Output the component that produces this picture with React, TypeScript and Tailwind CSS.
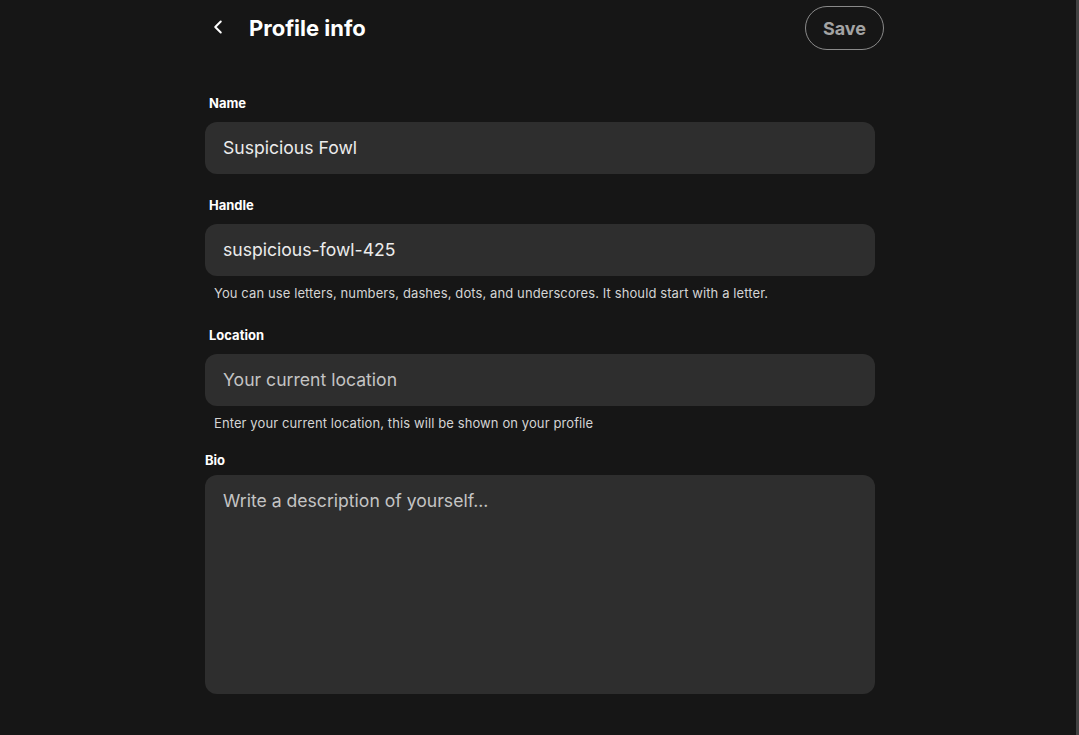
import { ChevronLeft } from "lucide-react";

const font = { fontFamily: "Inter, 'Noto Sans', sans-serif" };

const App = () => {
  return (
    <div className="flex min-h-[735px] bg-[#161616] text-white" style={font}>
      <div className="flex-1 pl-[4px]">
        <div className="mx-auto w-[670px]">
          {/* Header */}
          <div className="flex h-[57px] items-start pt-[6px] -mr-[9px]">
            <button className="mt-[5px] -ml-[3px] flex h-8 w-8 items-center justify-center text-white">
              <ChevronLeft size={22} strokeWidth={2.2} />
            </button>
            <h1 className="ml-[15px] mt-[5px] text-[22px] leading-[34px] font-bold">Profile info</h1>
            <button className="ml-auto h-[44px] w-[79px] rounded-full border border-[#8a8a8a] text-[18px] font-bold text-[#a3a3a3]">
              Save
            </button>
          </div>

          {/* Form */}
          <div className="flex flex-col pt-[38px]">
            <label className="pl-[4px] text-[13px] leading-4 font-bold">Name</label>
            <input
              defaultValue="Suspicious Fowl"
              className="mt-[11px] h-[52px] rounded-xl bg-[#2e2e2e] px-[18px] pb-[2px] text-[17.6px] text-[#ececec] outline-none"
            />

            <label className="mt-[23px] pl-[4px] text-[13px] leading-4 font-bold">Handle</label>
            <input
              defaultValue="suspicious-fowl-425"
              className="mt-[11px] h-[52px] rounded-xl bg-[#2e2e2e] px-[18px] pb-[2px] text-[17.6px] text-[#ececec] outline-none"
            />
            <p className="mt-[9px] pl-[9px] text-[13px] leading-4 tracking-[0.1px] text-[#d4d4d4]">
              You can use letters, numbers, dashes, dots, and underscores. It should start with a letter.
            </p>

            <label className="mt-[26px] pl-[4px] text-[13px] leading-4 font-bold">Location</label>
            <input
              placeholder="Your current location"
              className="mt-[11px] h-[52px] rounded-xl bg-[#2e2e2e] px-[18px] pb-[2px] text-[17.6px] text-[#ececec] outline-none placeholder:text-[#c4c4c4]"
            />
            <p className="mt-[9px] pl-[9px] text-[13px] leading-4 tracking-[0.1px] text-[#d4d4d4]">
              Enter your current location, this will be shown on your profile
            </p>

            <label className="mt-[21px] text-[13px] leading-4 font-bold">Bio</label>
            <textarea
              placeholder="Write a description of yourself..."
              className="mt-[7px] h-[219px] resize-none rounded-xl bg-[#2e2e2e] px-[18px] py-[13px] text-[17.6px] leading-[26px] text-[#ececec] outline-none placeholder:text-[#c4c4c4]"
            />
          </div>
        </div>
      </div>
      <div className="w-[3px] bg-[#424242]" />
    </div>
  );
};

export default App;
